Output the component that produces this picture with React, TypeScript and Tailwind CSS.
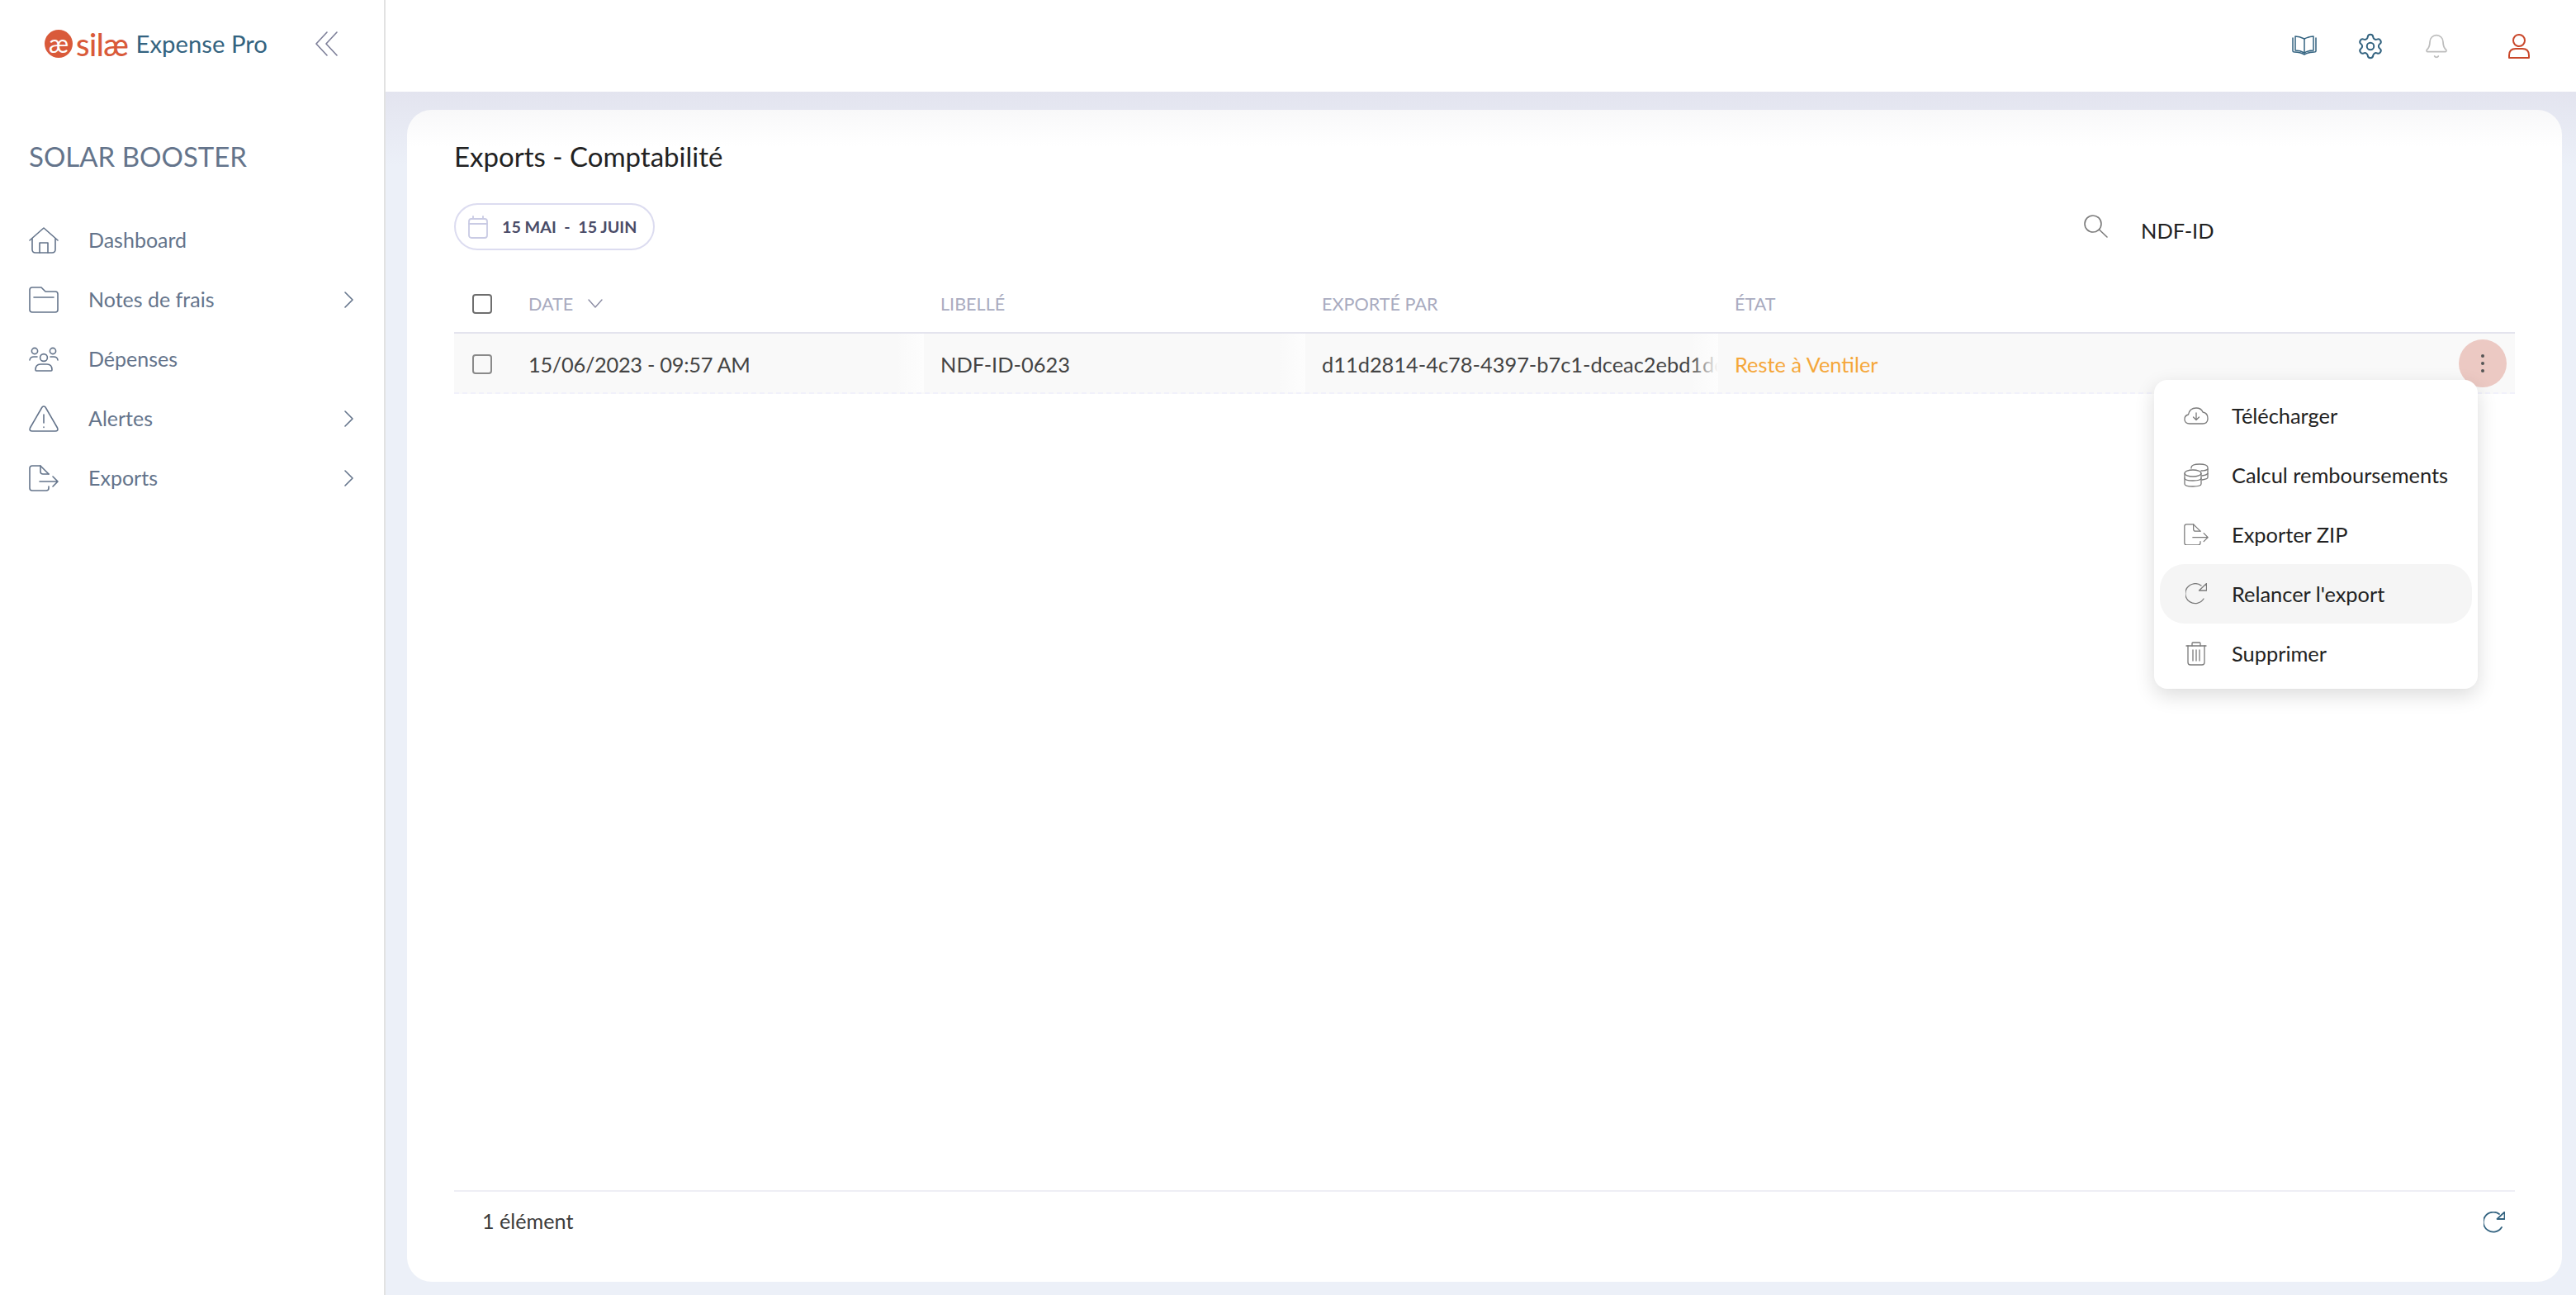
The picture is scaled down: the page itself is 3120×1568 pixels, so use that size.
import { Bell, Settings } from "lucide-react"
import type { ReactNode } from "react"

function IconHome() {
  return (
    <svg width="36" height="32" viewBox="0 0 36 32" fill="none" stroke="currentColor" strokeWidth="1.6" strokeLinejoin="round" strokeLinecap="round">
      <path d="M1 16 L18 1 L35 16" />
      <path d="M4 14 V27 Q4 31 8 31 H28 Q32 31 32 27 V14" />
      <path d="M13 31 V19 H23 V31" />
    </svg>
  )
}

function IconFolder() {
  return (
    <svg width="36" height="32" viewBox="0 0 36 32" fill="none" stroke="currentColor" strokeWidth="1.6" strokeLinejoin="round" strokeLinecap="round">
      <path d="M1 4 Q1 1 4 1 H15 L20 6 H32 Q35 6 35 9 V28 Q35 31 32 31 H4 Q1 31 1 28 Z" />
      <path d="M6 13 H30" />
    </svg>
  )
}

function IconUsers() {
  return (
    <svg width="36" height="30" viewBox="0 0 36 30" fill="none" stroke="currentColor" strokeWidth="1.6" strokeLinejoin="round" strokeLinecap="round">
      <circle cx="7" cy="5" r="3.6" />
      <circle cx="29" cy="5" r="3.6" />
      <circle cx="18" cy="13" r="4.4" />
      <path d="M1 16 Q1.5 12 6 12 H10" />
      <path d="M35 16 Q34.5 12 30 12 H26" />
      <path d="M8 28 Q8 21 14 21 H22 Q28 21 28 28 Q28 29 27 29 H9 Q8 29 8 28 Z" />
    </svg>
  )
}

function IconAlert() {
  return (
    <svg width="36" height="32" viewBox="0 0 36 32" fill="none" stroke="currentColor" strokeWidth="1.6" strokeLinejoin="round" strokeLinecap="round">
      <path d="M16 2 Q18 0 20 2 L34.5 27 Q36 31 32 31 H4 Q0 31 1.5 27 Z" />
      <path d="M18 11 V21" />
      <path d="M18 26 V26.4" />
    </svg>
  )
}

function IconExport({ size = 36, width = 1.6 }: { size?: number; width?: number }) {
  return (
    <svg width={size} height={(size * 32) / 36} viewBox="0 0 36 32" fill="none" stroke="currentColor" strokeWidth={width} strokeLinejoin="round" strokeLinecap="round">
      <path d="M24 11 L14 1 H4 Q1 1 1 4 V28 Q1 31 4 31 H21 Q24 31 24 28 V26" />
      <path d="M14 1 V8 Q14 11 17 11 H24" />
      <path d="M13 20 H35 M29 14 L35 20 L29 26" />
    </svg>
  )
}

function IconChevron() {
  return (
    <svg width="11" height="20" viewBox="0 0 11 20" fill="none" stroke="currentColor" strokeWidth="1.6" strokeLinecap="round" strokeLinejoin="round">
      <path d="M1 1 L10 10 L1 19" />
    </svg>
  )
}

function IconCollapse() {
  return (
    <svg width="27" height="30" viewBox="0 0 27 30" fill="none" stroke="#7d7f99" strokeWidth="1.6" strokeLinecap="round" strokeLinejoin="round">
      <path d="M14 1 L1 15 L14 29" />
      <path d="M26 1 L13 15 L26 29" />
    </svg>
  )
}

function IconBook() {
  return (
    <svg width="30" height="24" viewBox="0 0 30 24" fill="none" stroke="#336380" strokeWidth="1.5" strokeLinejoin="round" strokeLinecap="round">
      <path d="M15 4 Q9 1 4 1 V18 Q10 18 15 21 Q20 18 26 18 V1 Q21 1 15 4 Z" />
      <path d="M15 4 V21" />
      <path d="M1 3 V19 Q1 20 3 20 Q10 20 15 23 Q20 20 27 20 Q29 20 29 19 V3" />
    </svg>
  )
}

function IconUser() {
  return (
    <svg width="26" height="30" viewBox="0 0 26 30" fill="none" stroke="#c9472a" strokeWidth="2" strokeLinejoin="round">
      <circle cx="13" cy="8" r="7" />
      <path d="M1 29 V26 Q1 18 9 18 H17 Q25 18 25 26 V29 Z" />
    </svg>
  )
}

function IconSearch() {
  return (
    <svg width="30" height="28" viewBox="0 0 30 28" fill="none" stroke="#7b7b7b" strokeWidth="1.6" strokeLinecap="round">
      <circle cx="12" cy="11" r="10" />
      <path d="M19.5 18 L29 27" />
    </svg>
  )
}

function IconCalendar() {
  return (
    <svg width="24" height="28" viewBox="0 0 24 28" fill="none" stroke="#c9cbe4" strokeWidth="1.8" strokeLinejoin="round" strokeLinecap="round">
      <rect x="1" y="4" width="22" height="23" rx="3" />
      <path d="M1 10 H23" />
      <path d="M6 1 V4 M18 1 V4" />
    </svg>
  )
}

function IconCaret() {
  return (
    <svg width="18" height="11" viewBox="0 0 18 11" fill="none" stroke="#8b8ca3" strokeWidth="1.4" strokeLinecap="round" strokeLinejoin="round">
      <path d="M1 1 L9 10 L17 1" />
    </svg>
  )
}

function IconCloud() {
  return (
    <svg width="30" height="21" viewBox="0 0 30 21" fill="none" stroke="currentColor" strokeWidth="1.3" strokeLinejoin="round" strokeLinecap="round">
      <path d="M7 20 Q1 20 1 14.5 Q1 10 5.5 9 Q7 1 15 1 Q21 1 23 6 Q29 7 29 13.5 Q29 20 23 20 Z" />
      <path d="M15 7 V15 M11.5 12 L15 15.5 L18.5 12" />
    </svg>
  )
}

function IconCoins() {
  return (
    <svg width="30" height="29" viewBox="0 0 30 29" fill="none" stroke="currentColor" strokeWidth="1.3" strokeLinejoin="round" strokeLinecap="round">
      <ellipse cx="11" cy="12" rx="10" ry="4" />
      <path d="M1 12 V25 Q1 28 11 28 Q21 28 21 25 V12" />
      <path d="M1 18 Q1 21 11 21 Q21 21 21 18" />
      <path d="M9 6 V5 Q9 1 19 1 Q29 1 29 5 V17 Q29 19 22 20" />
      <path d="M21 9 Q27 9 29 7 M22 15 Q27 14.5 29 12.5" />
    </svg>
  )
}

function IconReload({ color = "currentColor", width = 1.3 }: { color?: string; width?: number }) {
  return (
    <svg width="26" height="26" viewBox="0 0 26 26" fill="none" stroke={color} strokeWidth={width} strokeLinecap="round" strokeLinejoin="round">
      <path d="M19 3 A12 12 0 1 0 22 19" />
      <path d="M16.5 9 H25.5 V0.5 Z" />
    </svg>
  )
}

function IconTrash() {
  return (
    <svg width="26" height="29" viewBox="0 0 26 29" fill="none" stroke="currentColor" strokeWidth="1.3" strokeLinejoin="round" strokeLinecap="round">
      <path d="M1 5 H25" />
      <path d="M8 5 V2 Q8 1 9 1 H17 Q18 1 18 2 V5" />
      <path d="M3 5 V25 Q3 28 6 28 H20 Q23 28 23 25 V5" />
      <path d="M9 10 V23 M13 10 V23 M17 10 V23" />
    </svg>
  )
}

function Fade() {
  return <div className="absolute right-0 top-0 bottom-0 w-[34px] bg-[linear-gradient(to_right,#f9f9f900,#fdfdfd)]" />
}

const navItems: { label: string; icon: ReactNode; arrow: boolean }[] = [
  { label: "Dashboard", icon: <IconHome />, arrow: false },
  { label: "Notes de frais", icon: <IconFolder />, arrow: true },
  { label: "Dépenses", icon: <IconUsers />, arrow: false },
  { label: "Alertes", icon: <IconAlert />, arrow: true },
  { label: "Exports", icon: <IconExport />, arrow: true },
]

const menuItems: { label: string; icon: ReactNode; active?: boolean }[] = [
  { label: "Télécharger", icon: <IconCloud /> },
  { label: "Calcul remboursements", icon: <IconCoins /> },
  { label: "Exporter ZIP", icon: <IconExport size={30} width={1.5} /> },
  { label: "Relancer l'export", icon: <IconReload />, active: true },
  { label: "Supprimer", icon: <IconTrash /> },
]

const gridCols = "grid grid-cols-[68px_501px_462px_500px_1fr] items-center"

export default function App() {
  return (
    <div className="flex h-[1568px] w-[3120px] overflow-hidden bg-white font-[Lato,sans-serif]">
      {/* Sidebar */}
      <aside className="flex w-[467px] shrink-0 flex-col border-r-2 border-[#e2e2e2] bg-white text-[#64748b]">
        <div className="flex h-[106px] items-center justify-between pl-[54px] pr-[56px]">
          <div className="flex items-center">
            <div className="flex h-[34px] w-[34px] items-center justify-center rounded-full bg-[#d95a3a] pb-[3px] text-[30px] leading-none text-white">æ</div>
            <span className="ml-[4px] text-[38px] leading-none font-medium tracking-[-0.5px] text-[#d95a3a]">silæ</span>
            <span className="ml-[9px] text-[29.3px] leading-none text-[#336380]">Expense Pro</span>
          </div>
          <IconCollapse />
        </div>
        <div className="mt-[63px] pl-[35px] text-[33px] leading-[40px]">SOLAR BOOSTER</div>
        <nav className="mt-[46px] flex flex-col">
          {navItems.map((item) => (
            <div key={item.label} className="flex h-[72px] items-center pl-[35px] pr-[37px] text-[25px]">
              <span className="flex w-[36px] justify-center">{item.icon}</span>
              <span className="ml-[36px] flex-1">{item.label}</span>
              {item.arrow && <IconChevron />}
            </div>
          ))}
        </nav>
      </aside>

      {/* Main */}
      <div className="flex min-w-0 flex-1 flex-col">
        <header className="flex h-[111px] shrink-0 items-center justify-end bg-white pr-[56px]">
          <div className="flex items-center">
            <span className="-mt-[2px] flex"><IconBook /></span>
            <Settings size={34} strokeWidth={1.4} className="ml-[48px] text-[#336380]" />
            <Bell size={32} strokeWidth={1.3} className="ml-[47px] text-[#bdbdbd]" />
            <span className="ml-[71px] flex"><IconUser /></span>
          </div>
        </header>

        <main className="flex min-h-0 flex-1 flex-col bg-[linear-gradient(to_bottom,#e3e4ef,#ecf0f8_90px)] pb-[16px] pl-[26px] pr-[17px] pt-[22px]">
          <section className="flex min-h-0 flex-1 flex-col rounded-[30px] bg-[linear-gradient(to_bottom,#f8f8f9,#ffffff_44px)] px-[57px] pt-[36px]">
            <h1 className="text-[33px] leading-[40px] font-normal text-[#222222]">Exports - Comptabilité</h1>

            <div className="mt-[37px] flex h-[57px] items-center justify-between">
              <div className="flex h-[57px] w-[243px] items-center rounded-full border-2 border-[#dcdcf0] pl-[15px]">
                <IconCalendar />
                <span className="ml-[17px] whitespace-pre text-[19.7px] font-bold text-[#4a4c68]">15 MAI  -  15 JUIN</span>
              </div>
              <div className="flex w-[523px] items-center">
                <IconSearch />
                <span className="ml-[40px] pt-[9px] text-[25.4px] text-[#222222]">NDF-ID</span>
              </div>
            </div>

            <div className={`${gridCols} mt-[29px] h-[72px] border-b-2 border-[#e4e4ee] pt-[2px] text-[21.6px] text-[#a9abbf]`}>
              <div className="flex justify-center">
                <span className="h-[24px] w-[24px] rounded-[4px] border-2 border-[#6e6e6e]" />
              </div>
              <div className="flex items-center pl-[22px]">
                DATE
                <span className="ml-[18px]"><IconCaret /></span>
              </div>
              <div className="pl-[20px]">LIBELLÉ</div>
              <div className="pl-[20px]">EXPORTÉ PAR</div>
              <div className="pl-[20px]">ÉTAT</div>
            </div>

            <div className="relative">
              <div className={`${gridCols} h-[73px] border-b-2 border-dashed border-[#f1f1fb] bg-[#f9f9f9] text-[25.4px] text-[#444444]`}>
                <div className="flex justify-center pt-[2px]">
                  <span className="h-[24px] w-[24px] rounded-[4px] border-2 border-[#8a8a8a]" />
                </div>
                <div className="relative flex h-full items-center overflow-hidden pl-[22px] pt-[4px] tracking-[-0.3px]">
                  15/06/2023 - 09:57 AM
                  <Fade />
                </div>
                <div className="relative flex h-full items-center overflow-hidden pl-[20px] pt-[4px]">
                  NDF-ID-0623
                  <Fade />
                </div>
                <div className="relative flex h-full items-center overflow-hidden whitespace-nowrap pl-[20px] pt-[4px]">
                  d11d2814-4c78-4397-b7c1-dceac2ebd1de
                  <Fade />
                </div>
                <div className="flex h-full items-center justify-between pl-[20px] pr-[10px] text-[#f5a73b]">
                  <span className="pt-[4px]">Reste à Ventiler</span>
                  <button className="flex h-[58px] w-[58px] flex-col items-center justify-center gap-[5px] rounded-full bg-[#ecc9c3]">
                    <span className="h-[4px] w-[4px] rounded-full bg-[#555555]" />
                    <span className="h-[4px] w-[4px] rounded-full bg-[#555555]" />
                    <span className="h-[4px] w-[4px] rounded-full bg-[#555555]" />
                  </button>
                </div>
              </div>

              {/* Row action menu */}
              <div className="absolute right-[45px] top-[56px] w-[392px] rounded-[16px] bg-white px-[7px] py-[7px] shadow-[0_8px_24px_rgba(0,0,0,0.14)]">
                {menuItems.map((item) => (
                  <div
                    key={item.label}
                    className={`flex h-[72px] items-center rounded-[30px] pl-[29px] text-[25.4px] text-[#222222] ${item.active ? "bg-[#f5f5f5]" : ""}`}
                  >
                    <span className="flex w-[30px] justify-center text-[#7a7a7a]">{item.icon}</span>
                    <span className="ml-[28px]">{item.label}</span>
                  </div>
                ))}
              </div>
            </div>

            <footer className="mt-auto flex h-[111px] shrink-0 justify-between border-t-2 border-[#eeeef5] pl-[34px] pr-[12px] pt-[20px]">
              <span className="text-[25.2px] leading-[30px] text-[#3c3c3c]">1 élément</span>
              <span className="mt-[4px] flex h-[26px]"><IconReload color="#336380" width={1.8} /></span>
            </footer>
          </section>
        </main>
      </div>
    </div>
  )
}
